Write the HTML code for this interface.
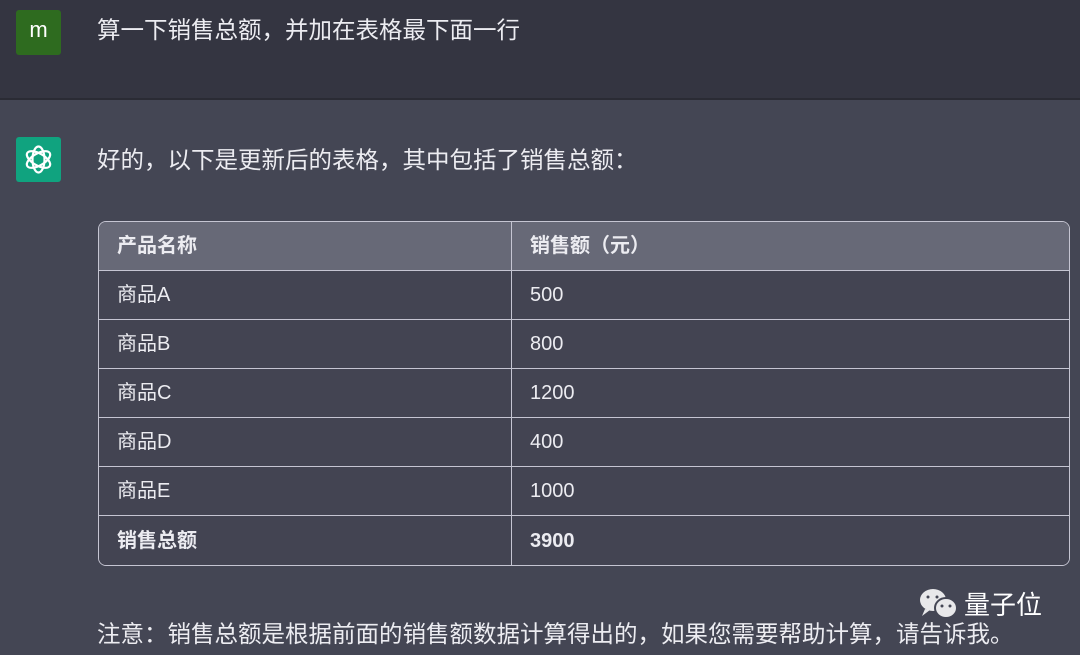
<!DOCTYPE html>
<html><head><meta charset="utf-8"><style>
*{margin:0;padding:0;box-sizing:border-box}
body{width:1080px;height:655px;overflow:hidden;background:#444654;font-family:"Liberation Sans","Noto Sans CJK SC",sans-serif;color:#ececf1;position:relative}
.top{position:absolute;left:0;top:0;width:1080px;height:100px;background:#343541;border-bottom:2px solid #2a2b34}
.av{position:absolute;width:45px;height:45px;border-radius:3px}
.t{position:absolute;font-size:23.5px;line-height:30px;white-space:nowrap;color:#ececf1}
table{position:absolute;left:98px;top:221px;width:972px;border-collapse:separate;border-spacing:0;border:1.5px solid #c5c5d2;border-radius:8px;overflow:hidden;font-size:20px;line-height:24px}
td{height:49px;padding:0 18px;border-right:1.5px solid #c5c5d2;border-bottom:1.5px solid #c5c5d2;background:#434452;vertical-align:middle}
td:last-child{border-right:none}
tr:last-child td{border-bottom:none}
tr.h td{background:#676977;font-weight:bold}
tr.b td{font-weight:bold}
td.c1{width:413px}
</style></head><body>
<div class="top"></div>
<div class="av" style="left:16px;top:10px;background:#2e6b1f;color:#fff;font-size:22px;text-align:center;line-height:40px">m</div>
<div class="t" style="left:97px;top:15px">算一下销售总额，并加在表格最下面一行</div>
<div class="av" style="left:16px;top:137px;background:#10a37f">
<svg width="45" height="45" viewBox="0 0 45 45" fill="none" stroke="#fff" stroke-width="2.2">
<g transform="translate(22.5 22.5)">
<ellipse rx="6" ry="13" transform="rotate(0)"/>
<ellipse rx="6" ry="13" transform="rotate(60)"/>
<ellipse rx="6" ry="13" transform="rotate(120)"/>
</g></svg></div>
<div class="t" style="left:97px;top:145px">好的，以下是更新后的表格，其中包括了销售总额：</div>
<table>
<tr class="h"><td class="c1">产品名称</td><td>销售额（元）</td></tr>
<tr><td class="c1">商品A</td><td>500</td></tr>
<tr><td class="c1">商品B</td><td>800</td></tr>
<tr><td class="c1">商品C</td><td>1200</td></tr>
<tr><td class="c1">商品D</td><td>400</td></tr>
<tr><td class="c1">商品E</td><td>1000</td></tr>
<tr class="b"><td class="c1">销售总额</td><td>3900</td></tr>
</table>
<div class="t" style="left:97px;top:619px">注意：销售总额是根据前面的销售额数据计算得出的，如果您需要帮助计算，请告诉我。</div>
<svg style="position:absolute;left:917px;top:585px" width="46" height="40" viewBox="0 0 46 40">
<ellipse cx="16" cy="15" rx="13" ry="11" fill="#e8e8ea"/><path d="M8 24 L5 31 L13 25Z" fill="#e8e8ea"/>
<ellipse cx="29" cy="23" rx="11" ry="10" fill="#e8e8ea" stroke="#444654" stroke-width="2"/>
<circle cx="11" cy="12" r="1.5" fill="#444654"/><circle cx="20" cy="12" r="1.5" fill="#444654"/>
<circle cx="25" cy="21" r="1.5" fill="#444654"/><circle cx="33" cy="21" r="1.5" fill="#444654"/></svg>
<div class="t" style="left:964px;top:590px;font-size:26px;color:#fff">量子位</div>
</body></html>
